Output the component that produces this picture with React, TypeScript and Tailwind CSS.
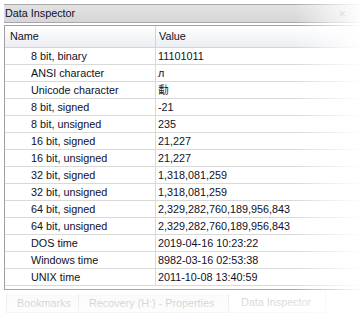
import React from "react";

const rows = [
  ["8 bit, binary", "11101011"],
  ["ANSI character", "л"],
  ["Unicode character", "勫"],
  ["8 bit, signed", "-21"],
  ["8 bit, unsigned", "235"],
  ["16 bit, signed", "21,227"],
  ["16 bit, unsigned", "21,227"],
  ["32 bit, signed", "1,318,081,259"],
  ["32 bit, unsigned", "1,318,081,259"],
  ["64 bit, signed", "2,329,282,760,189,956,843"],
  ["64 bit, unsigned", "2,329,282,760,189,956,843"],
  ["DOS time", "2019-04-16 10:23:22"],
  ["Windows time", "8982-03-16 02:53:38"],
  ["UNIX time", "2011-10-08 13:40:59"],
];

export default function App() {
  return (
    <div
      className="relative w-[360px] h-[329px] overflow-hidden bg-white text-[10.8px] text-[#101026]"
      style={{ fontFamily: '"Liberation Sans", "Noto Sans CJK SC", sans-serif' }}
    >
      <div className="flex flex-col pl-[4px] pt-[4px]">
        {/* title bar */}
        <div className="flex h-[19px] items-center justify-between border-y border-[#a8a8a8] bg-gradient-to-b from-[#e2e2e2] to-[#d6d6d6] pl-[1px] pr-[14px]">
          <span>Data Inspector</span>
          <span className="text-[13px] text-[#8a8a8a]">×</span>
        </div>

        {/* panel */}
        <div className="mt-[2px] flex flex-col border-l border-t border-b border-[#a0a0a0] bg-white pb-[3px]">
          <div className="flex h-[22px] items-center border-b border-[#d4d4d4] bg-gradient-to-b from-white to-[#eceef2]">
            <div className="w-[150px] pl-[5px]">Name</div>
            <div className="flex h-full flex-1 items-center border-l border-[#d4d4d4] pl-[3px]">Value</div>
          </div>
          {rows.map(([name, value]) => (
            <div key={name} className="flex h-[17px] items-center border-b border-[#d9d9d9]">
              <div className="w-[150px] pl-[26px]">{name}</div>
              <div className="flex h-full flex-1 items-center border-l border-[#d9d9d9] pl-[2px]">
                {value}
              </div>
            </div>
          ))}
        </div>

        {/* tabs */}
        <div className="mt-[1px] flex h-[22px] items-stretch pl-[2px]">
          <div className="mt-[3px] flex w-[73px] items-center border-r border-l border-b border-[#e6e6e6] bg-[#fafafa] pl-[10px] text-[#bcbcbc]">
            Bookmarks
          </div>
          <div className="mt-[3px] flex w-[150px] items-center border-r border-b border-[#e6e6e6] bg-[#fafafa] pl-[10px] text-[#bcbcbc]">
            Recovery (H:) - Properties
          </div>
          <div className="flex w-[97px] items-center border-r border-b border-[#ececec] bg-white pl-[12px] pt-[2px] text-[#c4c4c4]">
            Data Inspector
          </div>
        </div>
      </div>

      {/* fade overlays */}
      <div className="pointer-events-none absolute right-0 top-0 h-full w-[66px] bg-gradient-to-r from-white/0 via-white/50 to-white/95" />
      <div className="pointer-events-none absolute bottom-0 left-0 h-[42px] w-full bg-gradient-to-b from-white/0 via-white/50 to-white" />
    </div>
  );
}
